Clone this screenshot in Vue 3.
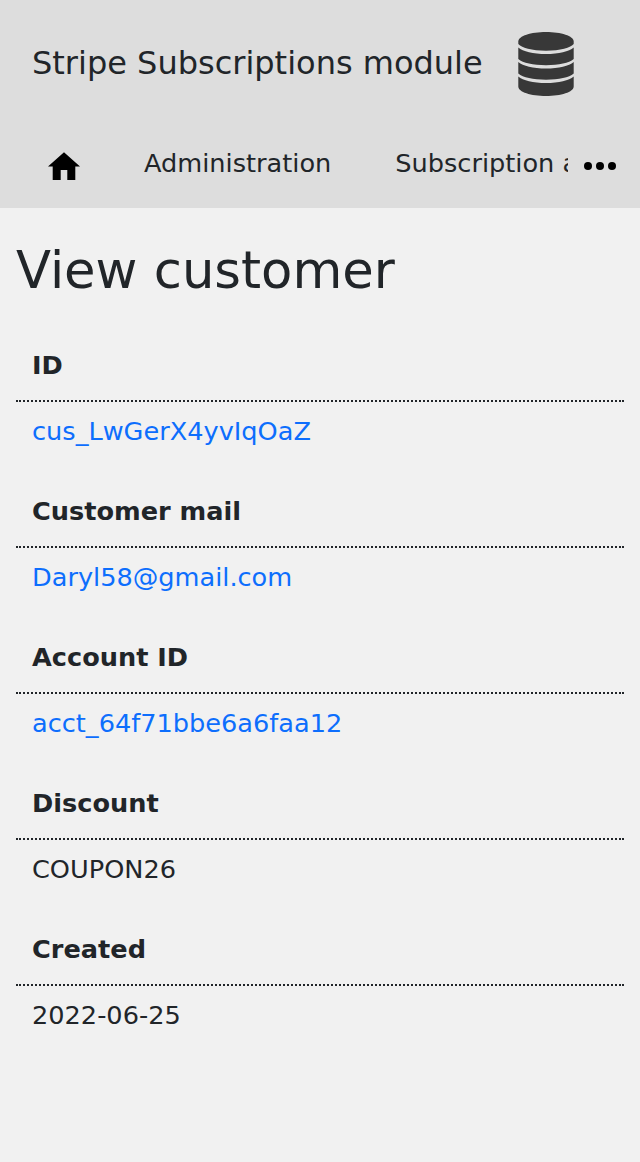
<script setup>
const fields = [
  { label: 'ID', value: 'cus_LwGerX4yvIqOaZ', link: true },
  { label: 'Customer mail', value: 'Daryl58@gmail.com', link: true },
  { label: 'Account ID', value: 'acct_64f71bbe6a6faa12', link: true },
  { label: 'Discount', value: 'COUPON26', link: false },
  { label: 'Created', value: '2022-06-25', link: false },
]
</script>

<template>
  <div class="page">
    <header>
      <div class="brand">
        <span class="title">Stripe Subscriptions module</span>
        <svg class="db" viewBox="0 0 64 64" fill="#383838">
          <path d="M4.3 9.5C4.3 4 17 0 32 0s27.7 4 27.7 9.5V12C57 15.500 46 18.700 32 18.700S7 15.500 4.300 12z" />
          <path d="M4.300 15.500C9 19.500 19 22 32 22s23-2.500 27.700-6.500V27C55 31 45 33.200 32 33.200S9 31 4.300 27z" />
          <path d="M4.300 30C9 34 19 36.500 32 36.500s23-2.500 27.700-6.500V41.500C55 45.500 45 47.700 32 47.700S9 45.500 4.300 41.500z" />
          <path d="M4.300 44.500C9 48.500 19 51 32 51s23-2.500 27.700-6.500V54.500C59.700 60 47 64 32 64S4.300 60 4.300 54.500z" />
        </svg>
      </div>
      <nav>
        <a class="home"><svg viewBox="0 0 32 28" width="32" height="28"><path d="M16 .2L0 14.400h4.700V28h8V18h6.600v10h8V14.400H32z" /></svg></a>
        <a class="item">Administration</a>
        <a class="item clip">Subscription and plans</a>
        <a class="more"><svg viewBox="0 0 32 8" width="32" height="8"><circle cx="4" cy="4" r="4" /><circle cx="16" cy="4" r="4" /><circle cx="28" cy="4" r="4" /></svg></a>
      </nav>
    </header>
    <main>
      <h1>View customer</h1>
      <dl>
        <template v-for="f in fields" :key="f.label">
          <dt>{{ f.label }}</dt>
          <dd :class="{ link: f.link }">{{ f.value }}</dd>
        </template>
      </dl>
    </main>
  </div>
</template>

<style>
body { margin: 0; background: #f1f1f1; }
</style>
<style scoped>
.page { min-height: 1162px; background: #f1f1f1; color: #212529; font: 25.6px/38px "DejaVu Sans", sans-serif; }
header { height: 208px; background: #ddd; }
.brand { display: flex; align-items: center; height: 128px; padding-left: 32px; }
.title { font-size: 32px; line-height: 48px; padding-bottom: 2px; white-space: nowrap; }
.db { width: 64px; height: 64px; margin-left: 31px; }
nav { display: flex; height: 80px; white-space: nowrap; }
nav svg { display: block; }
.home { width: 96px; padding: 24px 0 0 0; box-sizing: border-box; margin-left: 48px; }
.item { padding-top: 16px; margin-right: 64px; }
.clip { width: 173px; margin-right: 16px; overflow: hidden; }
.more { padding-top: 34px; }
main { padding: 0 16px; }
h1 { margin: 0; padding-top: 32px; font-size: 51.2px; line-height: 61px; font-weight: 400; }
dl { margin: 29px 0 0; }
dt { height: 72px; padding: 16px 16px 0; border-bottom: 2px dotted #212529; box-sizing: border-box; font-weight: 700; }
dd { margin: 0; height: 74px; padding: 10px 16px 0; box-sizing: border-box; }
.link { color: #0d6efd; }
</style>
